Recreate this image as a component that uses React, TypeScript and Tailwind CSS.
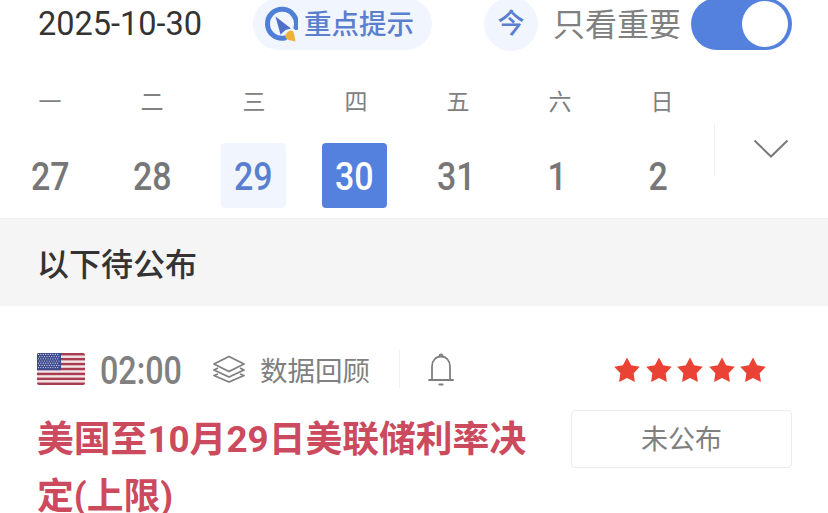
const WEEK = [
  { label: "一", day: "27" },
  { label: "二", day: "28" },
  { label: "三", day: "29", kind: "today" },
  { label: "四", day: "30", kind: "active" },
  { label: "五", day: "31" },
  { label: "六", day: "1" },
  { label: "日", day: "2" },
];

function dayClass(kind?: string) {
  if (kind === "active") return "bg-[#5480de] text-white rounded-[4px]";
  if (kind === "today") return "bg-[#f1f5fd] text-[#5a7fcf] rounded-[4px]";
  return "text-[#777777]";
}

function RocketIcon() {
  return (
    <svg width="34" height="37" viewBox="0 0 34 37" fill="none">
      <path d="M32 21.500A14.500 14.500 0 1 0 20.700 32" stroke="#4f7fd6" strokeWidth="5" strokeLinecap="round" />
      <path d="M11.500 10.500L27 22.500L21.500 24L16.500 28.500Z" fill="#4f6fc8" />
      <path d="M25 25C27.500 23.500 29.500 25 30 27.500L31.500 35.500L24.500 34C21.500 33 20.500 29.500 22 27.500Z" fill="#eeb23c" />
    </svg>
  );
}

function Flag() {
  const stripes = [0, 2, 4, 6, 8, 10, 12];
  const stars: { x: number; y: number }[] = [];
  for (let r = 0; r < 7; r++) {
    for (let c = 0; c < 9; c++) {
      stars.push({ x: 1.500 + c * 2.400 + (r % 2 ? 1.200 : 0), y: 1.400 + r * 2.200 });
    }
  }
  return (
    <svg width="48" height="32" viewBox="0 0 48 32" className="rounded-[2px]">
      <rect width="48" height="32" fill="#f3e6e8" rx="2" />
      {stripes.map((i) => (
        <rect key={i} y={(i * 32) / 13} width="48" height={32 / 13} fill="#a83c50" />
      ))}
      <rect width="24" height="17.200" fill="#3d4a8e" />
      {stars.map((s, i) => (
        <circle key={i} cx={s.x} cy={s.y} r="0.600" fill="#d8d8ea" />
      ))}
    </svg>
  );
}

function LayersIcon() {
  return (
    <svg width="32" height="28" viewBox="0 0 32 28" fill="none" stroke="#7f7f7f" strokeWidth="1.800" strokeLinejoin="round">
      <path d="M16 1.500L31 9L16 16.500L1 9Z" />
      <path d="M5 13L1 15L16 22L31 15L27 13" />
      <path d="M5 19L1 20.500L16 27L31 20.500L27 19" />
    </svg>
  );
}

function BellIcon() {
  return (
    <svg width="26" height="33" viewBox="0 0 26 33" fill="none" stroke="#7f7f7f" strokeWidth="1.800" strokeLinecap="round">
      <path d="M1 27H25" />
      <path d="M4 27V13.500C4 7.500 7.800 3.500 13 3.500C18.200 3.500 22 7.500 22 13.500V27" />
      <path d="M11.500 3C11.500 0.800 14.500 0.800 14.500 3" />
      <path d="M11.500 31.500H14.500" strokeWidth="2.200" />
    </svg>
  );
}

function Star() {
  return (
    <svg width="26" height="25" viewBox="0 0 26 25">
      <path d="M13 0.500L17.100 8.300L25.800 9.800L19.660 16.160L20.900 24.900L13 21L5.100 24.900L6.340 16.160L0.200 9.800L8.900 8.300Z" fill="#ea4335" />
    </svg>
  );
}

export default function App() {
  return (
    <div className="h-[513px] w-[828px] overflow-hidden bg-white font-['Roboto','Noto_Sans_CJK_SC',sans-serif]">
      <div className="-mt-[2px] flex h-[52px] items-center pl-[38px]">
        <div className="w-[215px] text-[32.500px] leading-none text-[#333333]">2025-10-30</div>
        <div className="flex h-[52px] w-[179px] items-center rounded-full bg-[#f1f5fd] pl-[11px]">
          <RocketIcon />
          <span className="ml-[6px] pt-[2px] text-[27.500px] font-medium leading-none text-[#5a7fcf]">重点提示</span>
        </div>
        <div className="ml-[52px] flex h-[54px] w-[54px] items-center justify-center rounded-full bg-[#f1f5fd] text-[27px] font-medium leading-none text-[#5a7fcf]">
          今
        </div>
        <span className="ml-[15px] pt-[2px] text-[32px] leading-none text-[#808080]">只看重要</span>
        <div className="ml-[10px] flex h-[52px] w-[101px] items-center justify-end rounded-full bg-[#5480de] pr-[4px]">
          <div className="h-[46px] w-[46px] rounded-full bg-white" />
        </div>
      </div>

      <div className="relative h-[169px] border-b border-[#f0f0f0]">
        <div className="grid w-[714px] -translate-x-px grid-cols-7 pt-[38px]">
          {WEEK.map((d) => (
            <span key={d.label} className="flex h-[28px] items-center justify-center text-[23px] leading-none text-[#808080]">
              {d.label}
            </span>
          ))}
        </div>
        <div className="mt-[27px] grid w-[709px] grid-cols-7">
          {WEEK.map((d) => (
            <div key={d.label} className="flex justify-center">
              <div className={`flex h-[65px] w-[65px] items-center justify-center pt-[4px] text-[39px] font-medium leading-none ${dayClass(d.kind)}`}>
                <span className="scale-x-[0.87]">{d.day}</span>
              </div>
            </div>
          ))}
        </div>
        <div className="absolute left-[714px] top-[74px] h-[52px] w-px bg-[#f0f0f0]" />
        <svg width="36" height="20" viewBox="0 0 36 20" fill="none" className="absolute left-[753px] top-[89px]">
          <path d="M1.500 1.500L18 17.500L34.500 1.500" stroke="#7a7a7a" strokeWidth="2" />
        </svg>
      </div>

      <div className="flex h-[87px] items-center bg-[#f5f5f5] pl-[37px] pt-[4px] text-[32px] font-medium leading-none text-[#333333]">
        以下待公布
      </div>

      <div className="flex pl-[37px] pt-[43px]">
        <div className="w-[505px]">
          <div className="flex h-[40px] items-center">
            <Flag />
            <span className="ml-[15px] w-[82px] origin-left scale-x-[0.85] whitespace-nowrap pt-[4px] text-[38px] font-medium leading-none text-[#808080]">
              02:00
            </span>
            <span className="ml-[31px]"><LayersIcon /></span>
            <span className="ml-[15px] pt-[5px] text-[27.500px] leading-none text-[#808080]">数据回顾</span>
            <div className="ml-[29px] h-[38px] w-px bg-[#f0f0f0]" />
            <span className="ml-[28px]"><BellIcon /></span>
          </div>
          <div className="mt-[22px] text-[36.800px] font-bold leading-[57px] text-[#cc4a5e]">
            美国至10月29日美联储利率决定(上限)
          </div>
        </div>
        <div className="ml-[29px] flex w-[221px] flex-col">
          <div className="flex h-[40px] items-center justify-center gap-[5.500px] pl-[17px]">
            <Star />
            <Star />
            <Star />
            <Star />
            <Star />
          </div>
          <div className="mt-[21px] flex h-[58px] items-center justify-center rounded-[4px] border border-[#ececec] pt-[3px] text-[27px] leading-none text-[#808080]">
            未公布
          </div>
        </div>
      </div>
    </div>
  );
}
